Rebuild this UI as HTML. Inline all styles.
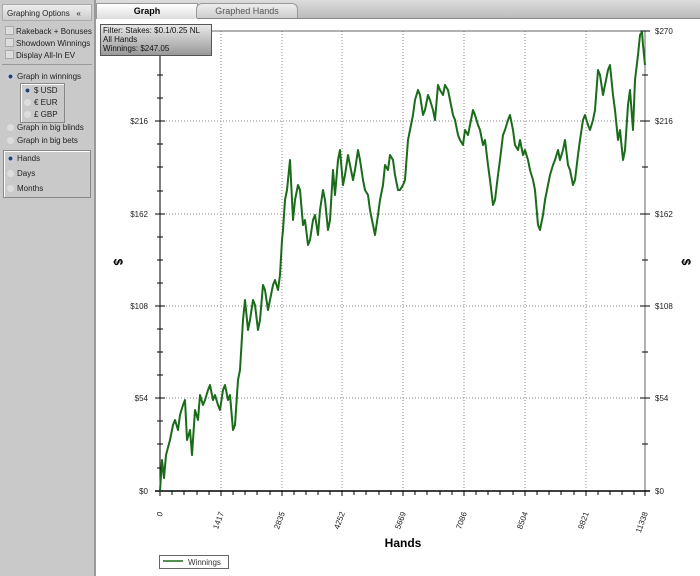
<!DOCTYPE html>
<html><head><style>
body{margin:0;width:700px;height:576px;overflow:hidden;background:#fff;font-family:"Liberation Sans",sans-serif;position:relative}
#left{position:absolute;left:0;top:0;width:94px;height:576px;background:#c9c9c9;border-right:2px solid #9a9a9a}
.t{position:absolute;font-size:8px;color:#222;white-space:nowrap}
.cb{display:inline-block;width:7px;height:7px;background:#ddd;border:1px solid #aaa;vertical-align:-1px;margin-right:2px}
.rd{display:inline-block;width:7px;height:7px;background:#ddd;border-radius:50%;vertical-align:-1px;margin-right:3px}
.rd.on{background:radial-gradient(#246 35%,#ccd 45%)}
.box{position:absolute;border:1px solid #888;box-shadow:inset 1px 1px #fff}
</style></head><body>
<div id="left">
<div style="position:absolute;left:2px;top:4px;width:88px;height:15px;background:linear-gradient(#eee,#ccc);border:1px solid #aaa"></div>
<div class="t" style="left:7px;top:9px">Graphing Options &nbsp;&nbsp;«</div>
<div class="t" style="left:5px;top:26px"><span class="cb"></span>Rakeback + Bonuses</div>
<div class="t" style="left:5px;top:38px"><span class="cb"></span>Showdown Winnings</div>
<div class="t" style="left:5px;top:50px"><span class="cb"></span>Display All-In EV</div>
<div style="position:absolute;left:2px;top:64px;width:90px;border-top:1px solid #999"></div>
<div class="t" style="left:7px;top:72px"><span class="rd on"></span>Graph in winnings</div>
<div class="box" style="left:20px;top:83px;width:43px;height:38px"></div>
<div class="t" style="left:24px;top:86px"><span class="rd on"></span>$ USD</div>
<div class="t" style="left:24px;top:98px"><span class="rd"></span>€ EUR</div>
<div class="t" style="left:24px;top:110px"><span class="rd"></span>£ GBP</div>
<div class="t" style="left:7px;top:123px"><span class="rd"></span>Graph in big blinds</div>
<div class="t" style="left:7px;top:136px"><span class="rd"></span>Graph in big bets</div>
<div class="box" style="left:3px;top:150px;width:86px;height:46px"></div>
<div class="t" style="left:7px;top:154px"><span class="rd on"></span>Hands</div>
<div class="t" style="left:7px;top:169px"><span class="rd"></span>Days</div>
<div class="t" style="left:7px;top:184px"><span class="rd"></span>Months</div>
</div>
<div style="position:absolute;left:96px;top:0;width:604px;height:18px;background:linear-gradient(#ddd,#bbb);border-bottom:1px solid #888"></div>
<div style="position:absolute;left:96px;top:3px;width:100px;height:15px;background:linear-gradient(#fff,#ddd);border:1px solid #999;border-bottom:none;font-size:9px;font-weight:bold;text-align:center;line-height:15px">Graph</div>
<div style="position:absolute;left:196px;top:3px;width:100px;height:14px;background:linear-gradient(#eee,#ccc);border:1px solid #999;border-bottom:none;border-radius:6px 6px 0 0;font-size:9px;color:#555;text-align:center;line-height:15px">Graphed Hands</div>
<svg style="position:absolute;left:0;top:0" width="700" height="576" font-family="Liberation Sans" font-size="8">
<g stroke="#888" stroke-dasharray="1,2" stroke-width="1">
<line x1="160" x2="643" y1="121" y2="121"/><line x1="160" x2="643" y1="214" y2="214"/><line x1="160" x2="643" y1="306" y2="306"/><line x1="160" x2="643" y1="398" y2="398"/>
<line x1="221" x2="221" y1="31" y2="491"/><line x1="282" x2="282" y1="31" y2="491"/><line x1="342" x2="342" y1="31" y2="491"/><line x1="403" x2="403" y1="31" y2="491"/><line x1="464" x2="464" y1="31" y2="491"/><line x1="525" x2="525" y1="31" y2="491"/><line x1="586" x2="586" y1="31" y2="491"/>
</g>
<rect x="160" y="31" width="485" height="460" fill="none" stroke="#666"/>
<line x1="160" y1="31" x2="160" y2="491" stroke="#000"/>
<line x1="155" y1="491" x2="650" y2="491" stroke="#000" stroke-width="1.5"/>
<g stroke="#000">
<path d="M160 491v5M172 491v4M184 491v4M197 491v4M209 491v4M221 491v5M233 491v4M245 491v4M257 491v4M270 491v4M282 491v5M294 491v4M306 491v4M318 491v4M330 491v4M342 491v5M354 491v4M366 491v4M379 491v4M391 491v4M403 491v5M415 491v4M427 491v4M440 491v4M452 491v4M464 491v5M476 491v4M488 491v4M500 491v4M513 491v4M525 491v5M537 491v4M549 491v4M561 491v4M574 491v4M586 491v5M598 491v4M610 491v4M622 491v4M634 491v4M645 491v5"/>
<path d="M155 121h10M155 214h10M155 306h10M155 398h10M157 52h6M157 75h6M157 98h6M157 144h6M157 167h6M157 191h6M157 237h6M157 260h6M157 283h6M157 329h6M157 352h6M157 375h6M157 421h6M157 444h6M157 468h6"/>
<path d="M640 31h10M640 121h10M640 214h10M640 306h10M640 398h10M642 75h6M642 167h6M642 260h6M642 352h6M642 444h6"/>
</g>
<polyline fill="none" stroke="#1a6b1a" stroke-width="2" stroke-linejoin="round" points="160,491 162,460 164,478 166,455 170,440 173,425 175,420 178,430 180,415 183,405 185,400 187,440 190,430 192,455 195,410 198,420 200,395 203,405 205,400 208,390 210,385 213,400 215,395 218,405 220,410 223,390 225,385 228,400 230,395 233,430 235,425 238,380 240,370 243,320 245,300 248,330 250,320 253,300 255,305 258,330 260,320 263,285 265,290 268,310 270,300 273,285 275,280 278,290 280,275 282,240 283,230 285,200 287,190 289,170 290,160 293,220 295,200 298,185 300,190 303,225 305,220 308,245 310,240 313,220 315,215 318,235 320,210 323,190 325,200 328,230 330,220 333,170 335,195 338,160 340,150 343,185 345,175 348,155 350,165 353,180 355,170 358,150 360,160 363,180 365,190 368,195 370,210 373,225 375,235 378,215 380,200 383,185 385,165 388,170 390,155 393,160 395,175 398,190 400,190 403,185 405,180 408,140 410,130 413,115 415,100 418,90 420,95 423,115 425,110 428,95 430,100 433,110 435,120 438,85 440,90 443,95 445,85 448,90 450,100 453,115 455,120 458,135 460,140 463,145 465,130 468,135 470,125 473,110 475,115 478,125 480,130 483,145 485,140 488,165 490,180 493,205 495,200 498,175 500,160 503,135 505,130 508,120 510,115 513,130 515,145 518,150 520,140 523,155 525,150 528,160 530,170 533,180 535,190 538,225 540,230 543,215 545,200 548,185 550,175 553,165 555,160 558,150 560,160 563,150 565,140 568,165 570,170 573,185 575,180 578,155 580,140 583,120 585,115 588,125 590,130 593,120 595,110 598,70 600,75 603,95 605,85 608,70 610,65 613,95 615,110 618,140 620,130 623,160 625,150 628,105 630,90 633,130 635,80 638,55 640,35 642,32 643,45 645,65"/>
<g fill="#222" text-anchor="end">
<text x="148" y="124">$216</text><text x="148" y="217">$162</text><text x="148" y="309">$108</text><text x="148" y="401">$54</text><text x="148" y="494">$0</text>
</g>
<g fill="#222"><text x="655" y="34">$270</text><text x="655" y="124">$216</text><text x="655" y="217">$162</text><text x="655" y="309">$108</text><text x="655" y="401">$54</text><text x="655" y="494">$0</text></g>
<text x="118" y="266" font-size="12" font-weight="bold" transform="rotate(90 118 262)" text-anchor="middle">$</text>
<text x="686" y="266" font-size="12" font-weight="bold" transform="rotate(90 686 262)" text-anchor="middle">$</text>
<g fill="#222" text-anchor="end">
<text transform="translate(163,513) rotate(-70)">0</text>
<text transform="translate(224,513) rotate(-70)">1417</text>
<text transform="translate(285,513) rotate(-70)">2835</text>
<text transform="translate(345,513) rotate(-70)">4252</text>
<text transform="translate(406,513) rotate(-70)">5669</text>
<text transform="translate(467,513) rotate(-70)">7086</text>
<text transform="translate(528,513) rotate(-70)">8504</text>
<text transform="translate(589,513) rotate(-70)">9821</text>
<text transform="translate(648,513) rotate(-70)">11338</text>
</g>
<text x="403" y="547" font-size="12" font-weight="bold" text-anchor="middle">Hands</text>
<rect x="159.5" y="555.5" width="69" height="13" fill="#fff" stroke="#666"/>
<line x1="163" y1="561" x2="183" y2="561" stroke="#1a6b1a" stroke-width="1.5"/>
<text x="188" y="565" fill="#333">Winnings</text>
</svg>
<div style="position:absolute;left:100px;top:24px;width:112px;height:32px;background:linear-gradient(#e8e8e8,#999);border:1px solid #555;font-size:8px;line-height:9px;padding:1px 2px;color:#111;box-sizing:border-box">Filter: Stakes: $0.1/0.25 NL<br>All Hands<br>Winnings: $247.05</div>
</body></html>
